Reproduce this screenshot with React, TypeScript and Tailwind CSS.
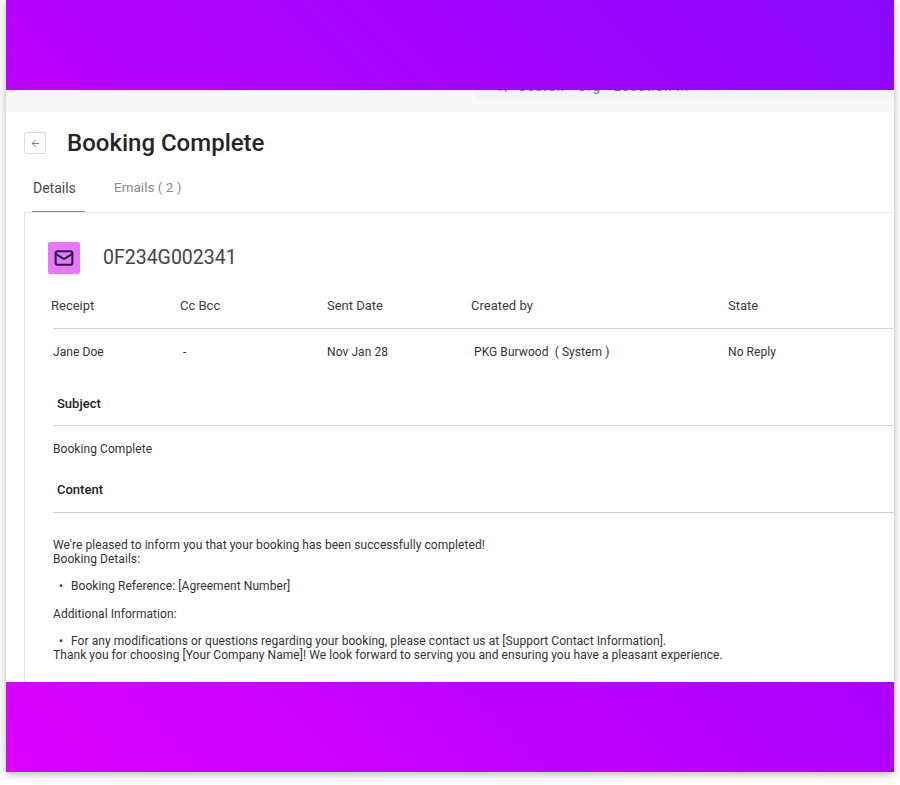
import { ArrowLeft, Mail, Search } from 'lucide-react'

const font = { fontFamily: 'Roboto, sans-serif' }

export default function App() {
  return (
    <div className="min-h-[785px] bg-white antialiased" style={font}>
      <div className="ml-[6px] w-[888px] h-[772px] flex flex-col bg-white shadow-[0_2px_8px_rgba(0,0,0,0.3)]">
        <div className="h-[90px] shrink-0 bg-[linear-gradient(45deg,#bb00ff,#8a08ff)]" />

        <div className="h-[22px] shrink-0 bg-[#f9f9f9] overflow-hidden">
          <div className="ml-[469px] h-[10px] bg-[#f4f4f4] rounded-bl-sm overflow-hidden">
            <div className="flex items-center gap-[10px] pl-[19px] -mt-[13px] h-[18px] text-[14px] tracking-[0.6px] text-[#777]">
              <Search className="w-[14px] h-[14px]" />
              <span>Search · Org · Location ...</span>
            </div>
          </div>
        </div>

        <div className="flex-1 min-h-0 overflow-hidden flex flex-col">
          <div className="flex items-center pl-[18px] pt-[20px] h-[42px] shrink-0">
            <button className="w-[22px] h-[22px] flex items-center justify-center border border-[#dcdcdc] rounded-[2px] text-[#777]">
              <ArrowLeft className="w-[11px] h-[11px]" />
            </button>
            <h1 className="ml-[21px] text-[24px] font-medium leading-none text-[#262626]">Booking Complete</h1>
          </div>

          <div className="flex pl-[26px] h-[59px] pt-[20px] shrink-0 items-stretch">
            <div className="w-[53px] border-b-2 border-[#8e8e8e] text-[14px] text-[#4b4b4b] pl-px pt-[4px]">Details</div>
            <div className="ml-[29px] text-[13.5px] text-[#8c8c8c] pt-[3px]">Emails ( 2 )</div>
          </div>

          <div className="ml-[18px] -mt-px flex-1 border-l border-t border-[#e6e6e6] pt-[29px]">
            <div className="flex items-center pl-[23px]">
              <div className="w-[32px] h-[32px] rounded-[2px] bg-[#e879ff] flex items-center justify-center text-[#2b1b3a]">
                <Mail className="w-[20px] h-[20px]" strokeWidth={2.4} />
              </div>
              <span className="ml-[23px] text-[19.5px] text-[#444]">0F234G002341</span>
            </div>

            <div className="ml-[26px] mt-[22px] grid grid-cols-[129px_147px_144px_257px_1fr] text-[13px] text-[#3c3c3c] h-[19px] items-center">
              <span>Receipt</span>
              <span>Cc Bcc</span>
              <span>Sent Date</span>
              <span>Created by</span>
              <span>State</span>
            </div>
            <div className="ml-[28px] mt-[13px] h-px bg-[#d4d4dc]" />

            <div className="ml-[28px] mt-[14px] grid grid-cols-[130px_144px_147px_254px_1fr] text-[12px] tracking-[0.07px] text-[#333] h-[17px] items-center">
              <span>Jane Doe</span>
              <span>-</span>
              <span>Nov Jan 28</span>
              <span>PKG Burwood &nbsp;( System )</span>
              <span>No Reply</span>
            </div>

            <div className="ml-[32px] mt-[35px] text-[13px] font-medium text-[#222] h-[17px] leading-[17px]">Subject</div>
            <div className="ml-[28px] mt-[13px] h-px bg-[#cfcfd4]" />
            <div className="ml-[28px] mt-[15px] text-[12px] tracking-[0.07px] text-[#333] h-[17px] leading-[17px]">Booking Complete</div>
            <div className="ml-[32px] mt-[23px] text-[13px] font-medium text-[#222] h-[17px] leading-[17px]">Content</div>
            <div className="ml-[28px] mt-[14px] h-px bg-[#cfcfd4]" />

            <div className="ml-[28px] mt-[25px] text-[12px] tracking-[0.06px] leading-[14px] text-[#333]">
              <p>We're pleased to inform you that your booking has been successfully completed!</p>
              <p>Booking Details:</p>
              <ul className="mt-[13px] mb-[14px]">
                <li className="flex"><span className="w-[18px] pl-[6px]">•</span>Booking Reference: [Agreement Number]</li>
              </ul>
              <p>Additional Information:</p>
              <ul className="mt-[13px]">
                <li className="flex"><span className="w-[18px] pl-[6px]">•</span>For any modifications or questions regarding your booking, please contact us at [Support Contact Information].</li>
              </ul>
              <p>Thank you for choosing [Your Company Name]! We look forward to serving you and ensuring you have a pleasant experience.</p>
            </div>
          </div>
        </div>

        <div className="h-[90px] shrink-0 bg-[linear-gradient(45deg,#dc00ff,#aa00ff)]" />
      </div>
    </div>
  )
}
